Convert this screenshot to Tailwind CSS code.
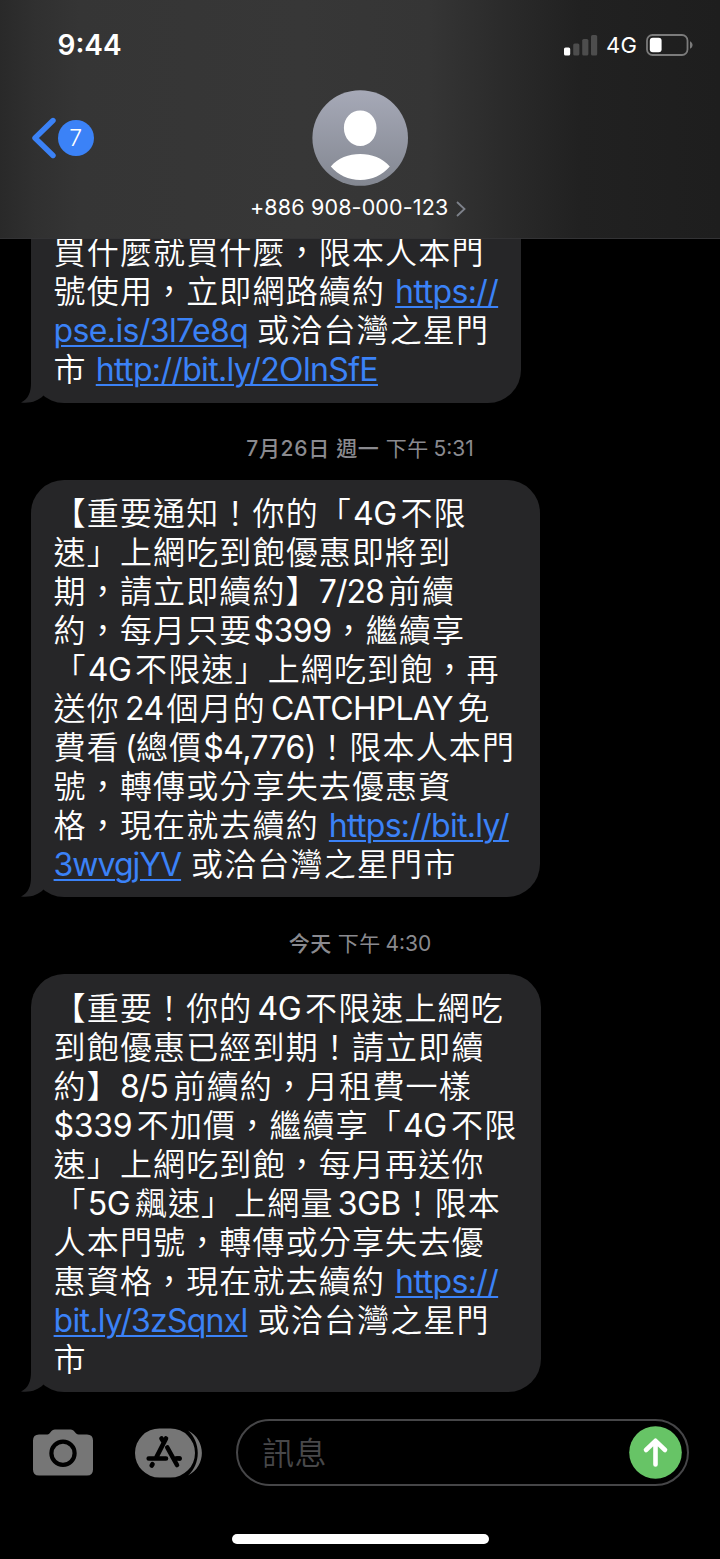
<!DOCTYPE html>
<html lang="zh-Hant">
<head>
<meta charset="utf-8">
<title>訊息</title>
<script src="https://cdn.jsdelivr.net/npm/@tailwindcss/browser@4"></script>
<style>
  body { text-spacing-trim: space-all; text-autospace: no-autospace; }
  .msg { font-weight: 350; }
  .msg > p { height: 39.1px; line-height: 39.1px; white-space: pre; letter-spacing: 1.15px; }
  .msg span, .msg a { display: inline-block; font-weight: 400; font-family: Inter, sans-serif; }
  .msg a { color: #3b82f7; text-decoration: underline; text-decoration-thickness: 2px; text-underline-offset: 3px; }
</style>
</head>
<body class="bg-black">
<div class="w-[720px] h-[1559px] flex flex-col overflow-hidden bg-black text-white font-['Inter','Noto_Sans_CJK_TC',sans-serif]">

  <header class="h-[239px] shrink-0 flex flex-col border-b border-[#333335] bg-[linear-gradient(90deg,#292929_0px,#303030_35px,#353535_80px,#373737_300px,#353535_430px,#2b2b2b_500px,#212121_580px,#1e1e1e_720px)]">
    <div class="h-[90px] flex justify-between items-center pl-[57.5px] pr-[27px]">
      <div class="text-[28px] font-semibold leading-none">9:44</div>
      <div class="flex items-center">
        <svg class="w-[34px] h-[22px]" viewBox="0 0 34 22"><rect x="0" y="13.5" width="6.2" height="8" rx="1.6" fill="#fff"/><g fill="#4d4d4d"><rect x="9.2" y="9.5" width="6.2" height="12" rx="1.6"/><rect x="18.2" y="5" width="6.2" height="16.5" rx="1.6"/><rect x="27" y="1" width="6.2" height="20.5" rx="1.6"/></g></svg>
        <div class="ml-2 w-[31px] text-[22px] tracking-[0.4px] leading-none">4G</div>
        <svg class="ml-[9px] w-[47px] h-[22px]" viewBox="0 0 47 22"><rect x="1" y="1" width="40.5" height="20" rx="5.5" fill="none" stroke="#7b7b7b" stroke-width="1.8"/><rect x="3.8" y="3.8" width="11.8" height="14.4" rx="3" fill="#fff"/><path d="M44 7.2c3.4 1.6 3.4 6 0 7.6z" fill="#7b7b7b"/></svg>
      </div>
    </div>
    <div class="h-24 grid grid-cols-[312px_96px_1fr]">
      <div class="flex items-center pl-[31px]">
        <svg class="w-[26px] h-[42px]" viewBox="0 0 26 42"><path d="M22 3.5 4 21 22 38.5" fill="none" stroke="#3b82f7" stroke-width="5.4" stroke-linecap="round" stroke-linejoin="round"/></svg>
        <div class="ml-[1px] w-[35.5px] h-[35.5px] rounded-full bg-[#3b82f7] flex items-center justify-center text-[23px] font-light leading-none">7</div>
      </div>
      <svg class="w-24 h-24" viewBox="0 0 96 96"><defs><linearGradient id="av" x1="0" y1="0" x2="0" y2="1"><stop offset="0" stop-color="#a6a9b7"/><stop offset="1" stop-color="#838791"/></linearGradient></defs><circle cx="48.2" cy="48" r="47.8" fill="url(#av)"/><path d="M48.3 20.5c9 0 16.2 7.3 16.2 17.5s-7.2 18-16.2 18-16.4-7.8-16.4-18 7.4-17.5 16.4-17.5zM18.8 76.5c7-8.5 18-12.5 29.4-12.5s22.4 4 29.6 12.5c-7.5 8.5-17.5 13.5-29.5 13.5s-22-5-29.5-13.5z" fill="#fff"/></svg>
    </div>
    <div class="flex items-center h-[44px] pl-[250px]">
      <div class="w-[198px] text-[21.5px] leading-none tracking-[0.15px] whitespace-nowrap">+886 908-000-123</div>
      <svg class="ml-[8px] mt-[2px] w-[10px] h-4" viewBox="0 0 10 16"><path d="M1 1l7.5 7L1 15" fill="none" stroke="#7e828b" stroke-width="1.8"/></svg>
    </div>
  </header>

  <main class="flex-1 min-h-0 flex flex-col items-start pl-[31px] text-[32px]">
    <div class="relative w-[489.5px] h-[163.5px] shrink-0 bg-[#262628] rounded-b-[33px] pl-[22.6px] pb-[13px] flex flex-col justify-end">
      <svg class="absolute -left-[10px] bottom-0 w-6 h-9" viewBox="0 -12 24 36"><path d="M10 -12V4C10 13 7.500 20 0 23.500 10 24.500 17 22 22.500 16.500V-12z" fill="#262628"/></svg>
      <div class="msg relative h-[150.5px] overflow-hidden flex flex-col justify-end">
        <p>買什麼就買什麼，限本人本門</p>
        <p>號使用，立即網路續約<a class="ml-[10px] tracking-[-0.6px]">https://</a></p>
        <p><a class="w-[203.5px] tracking-[-0.62px]">pse.is/3l7e8q</a>或洽台灣之星門</p>
        <p>市<a class="ml-[9px] tracking-[-0.65px]">http://bit.ly/2OlnSfE</a></p>
      </div>
    </div>

    <div class="w-[658px] h-[77px] shrink-0 flex items-center justify-center text-[21px] leading-none text-[#8a8a8f] whitespace-pre pt-[15px]"><div class="font-medium tracking-[0.7px]">7月26日 週一 </div><div class="mr-[5px] tracking-[0.3px]">下午</div><div>5:31</div></div>

    <div class="relative w-[508.5px] h-[417.5px] shrink-0 bg-[#262628] rounded-[33px] pl-[22.6px] pt-[14px]">
      <svg class="absolute -left-[10px] bottom-0 w-6 h-9" viewBox="0 -12 24 36"><path d="M10 -12V4C10 13 7.500 20 0 23.500 10 24.500 17 22 22.500 16.500V-12z" fill="#262628"/></svg>
      <div class="msg relative">
        <p>【重要通知！你的「<span class="w-[48.5px] pl-px tracking-[-0.5px]">4G</span>不限</p>
        <p>速」上網吃到飽優惠即將到</p>
        <p>期，請立即續約】<span class="w-[70px] tracking-[-1px]">7/28</span>前續</p>
        <p>約，每月只要<span class="w-[80px] pl-px tracking-[-0.5px]">$399</span>，繼續享</p>
        <p>「<span class="w-[48.3px] pl-px tracking-[-0.5px]">4G</span>不限速」上網吃到飽，再</p>
        <p>送你<span class="w-[46.6px] pl-[5px] tracking-[-0.5px]">24</span>個月的<span class="w-[191.5px] pl-[5px] tracking-[-0.8px]">CATCHPLAY</span>免</p>
        <p>費看<span class="w-[16px] pl-[5px] tracking-normal">(</span>總價<span class="w-[114px] pl-px tracking-[-0.6px]">$4,776)</span>！限本人本門</p>
        <p>號，轉傳或分享失去優惠資</p>
        <p>格，現在就去續約<a class="ml-[10px] tracking-[-0.7px]">https://bit.ly/</a></p>
        <p><a class="mr-[10px] tracking-[-1px]">3wvgjYV</a>或洽台灣之星門市</p>
      </div>
    </div>

    <div class="w-[658px] h-[77px] shrink-0 flex items-center justify-center text-[21px] leading-none text-[#8a8a8f] whitespace-pre pt-[15px]"><div class="font-medium tracking-[0.5px]">今天 </div><div class="mr-[5px] tracking-[0.3px]">下午</div><div>4:30</div></div>

    <div class="relative w-[509.5px] h-[417.5px] shrink-0 bg-[#262628] rounded-[33px] pl-[22.6px] pt-[14.5px]">
      <svg class="absolute -left-[10px] bottom-0 w-6 h-9" viewBox="0 -12 24 36"><path d="M10 -12V4C10 13 7.500 20 0 23.500 10 24.500 17 22 22.500 16.500V-12z" fill="#262628"/></svg>
      <div class="msg relative">
        <p>【重要！你的<span class="w-[52.5px] pl-[5px] tracking-[-0.5px]">4G</span>不限速上網吃</p>
        <p>到飽優惠已經到期！請立即續</p>
        <p>約】<span class="w-[53.6px] tracking-[-1px]">8/5</span>前續約，月租費一樣</p>
        <p><span class="w-[83.2px] tracking-[-0.3px]">$339</span>不加價，繼續享「<span class="w-[49px] pl-px tracking-[-0.5px]">4G</span>不限</p>
        <p>速」上網吃到飽，每月再送你</p>
        <p>「<span class="w-[48px] pl-px tracking-[-0.5px]">5G</span>飆速」上網量<span class="w-[67.8px] pl-[4px] tracking-[-0.5px]">3GB</span>！限本</p>
        <p>人本門號，轉傳或分享失去優</p>
        <p>惠資格，現在就去續約<a class="ml-[10px] tracking-[-0.6px]">https://</a></p>
        <p><a class="w-[204px] tracking-[-0.75px]">bit.ly/3zSqnxl</a>或洽台灣之星門</p>
        <p>市</p>
      </div>
    </div>
  </main>

  <footer class="h-[167px] shrink-0 flex flex-col items-center pt-[27px]">
    <div class="w-full h-[67px] flex items-center pl-[33px] pr-[31px]">
      <svg class="w-[60px] h-[47px]" viewBox="0 0 60 47"><path fill="#767676" d="M6 5.500H14.500C17 5.500 18 .5 22 .5H37.500C41.500 .5 42.500 5.500 45.500 5.500H54Q60 5.500 60 11.500V40.500Q60 46.500 54 46.500H6Q0 46.500 0 40.500V11.500Q0 5.500 6 5.500z"/><circle cx="30" cy="24.300" r="11.600" fill="#767676" stroke="#000" stroke-width="4.200"/></svg>
      <svg class="ml-[42px] w-[68px] h-[50px]" viewBox="0 0 68 50"><path fill="#767676" d="M24.500 .5H35.500A24.500 24.500 0 0 1 35.500 49.500H24.500A24.500 24.500 0 0 1 24.500 .5zM53 2.500C71.500 12 71.500 38 53 47.500C66 36 66 14 53 2.500z"/><g stroke="#000" stroke-width="4.600" stroke-linecap="round" fill="none"><path d="M31 10.500 21.500 29M26.500 10.500 29 14.500M13.700 30.500H31M38.500 30.500H44.500"/><path d="M32.500 20 42 37" stroke="#767676" stroke-width="7" stroke-linecap="butt"/><path d="M32.300 19.500 42 37M40.500 30.500H44.500M17.500 36.200 16.700 37.500"/></g></svg>
      <div class="ml-[33px] w-[453px] h-[67px] rounded-full border-2 border-[#464648] flex items-center justify-between pl-6 pr-[5px]">
        <span class="pt-[2px] text-[32px] leading-none text-[#48484a] tracking-[0.5px] font-[350]">訊息</span>
        <svg class="w-[53px] h-[53px]" viewBox="0 0 53 53"><circle cx="26.500" cy="26.500" r="26.300" fill="#67c466"/><path d="M26.500 38.500V15M17 24 26.500 14.800 36 24" fill="none" stroke="#fff" stroke-width="4.600" stroke-linecap="round" stroke-linejoin="round"/></svg>
      </div>
    </div>
    <div class="mt-12 w-[257px] h-[10px] rounded-full bg-white"></div>
  </footer>
</div>
</body>
</html>
